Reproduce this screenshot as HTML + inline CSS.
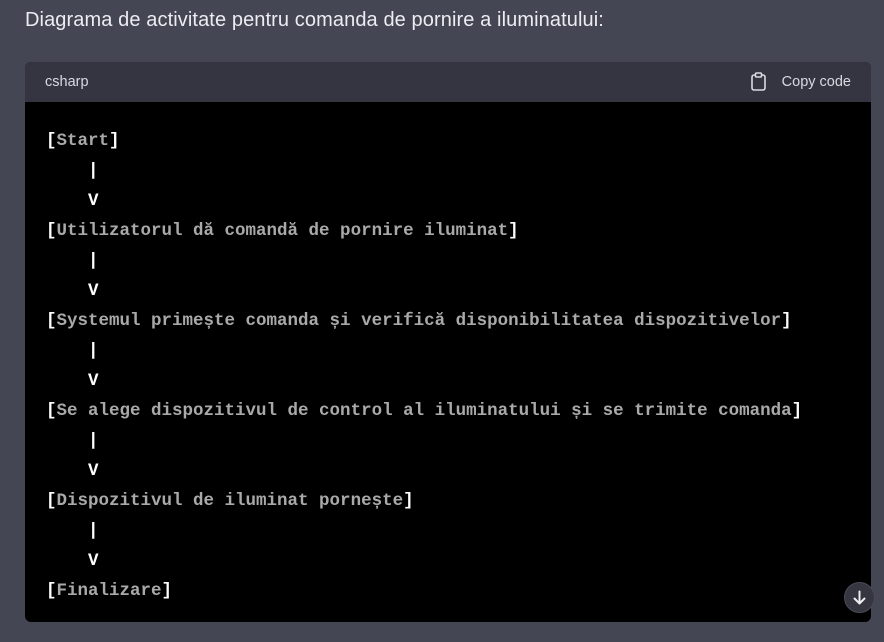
<!DOCTYPE html>
<html><head><meta charset="utf-8"><style>
html,body{margin:0;padding:0;width:884px;height:642px;overflow:hidden;background:#444654;}
.title{position:absolute;left:25px;top:7px;font:20px "Liberation Sans",sans-serif;color:#ececf1;line-height:26px;letter-spacing:0.1px;}
.block{position:absolute;left:25px;top:62px;width:846px;height:560px;background:#000;border-radius:6px;overflow:hidden;}
.hdr{height:40px;background:#343541;position:relative;font:14.5px "Liberation Sans",sans-serif;color:#d9d9e3;}
.hdr .lang{position:absolute;left:20px;top:12px;}
.hdr .copy{position:absolute;right:20px;top:12px;}
.hdr svg{position:absolute;left:725px;top:10px;}
pre{margin:0;position:absolute;left:21px;top:64px;font:17.5px/30px "Liberation Mono",monospace;color:#a9a9a9;font-weight:bold;}
.w{color:#fff;}
.scroll{position:absolute;left:844px;top:582px;width:31px;height:31px;border-radius:50%;background:#35363f;border:1px solid #4a4b57;box-sizing:border-box;}
</style></head><body>
<div class="title">Diagrama de activitate pentru comanda de pornire a iluminatului:</div>
<div class="block">
<div class="hdr"><span class="lang">csharp</span>
<svg width="18" height="20" viewBox="0 0 18 20" fill="none" stroke="#d9d9e3" stroke-width="1.6" stroke-linejoin="round"><rect x="2" y="3" width="13" height="15" rx="2"/><rect x="5.5" y="1" width="6" height="4" rx="1" fill="#343541"/></svg>
<span class="copy">Copy code</span></div>
<pre><span class="w">[</span>Start<span class="w">]</span>
<span class="w">    |</span>
<span class="w">    V</span>
<span class="w">[</span>Utilizatorul dă comandă de pornire iluminat<span class="w">]</span>
<span class="w">    |</span>
<span class="w">    V</span>
<span class="w">[</span>Systemul primește comanda și verifică disponibilitatea dispozitivelor<span class="w">]</span>
<span class="w">    |</span>
<span class="w">    V</span>
<span class="w">[</span>Se alege dispozitivul de control al iluminatului și se trimite comanda<span class="w">]</span>
<span class="w">    |</span>
<span class="w">    V</span>
<span class="w">[</span>Dispozitivul de iluminat pornește<span class="w">]</span>
<span class="w">    |</span>
<span class="w">    V</span>
<span class="w">[</span>Finalizare<span class="w">]</span></pre>
</div>
<div class="scroll"><svg width="29" height="29" viewBox="0 0 29 29" fill="none" stroke="#ececf1" stroke-width="2" stroke-linecap="round" stroke-linejoin="round"><path d="M14.5 8.5v12M9.5 15.5l5 5 5-5"/></svg></div>
</body></html>
